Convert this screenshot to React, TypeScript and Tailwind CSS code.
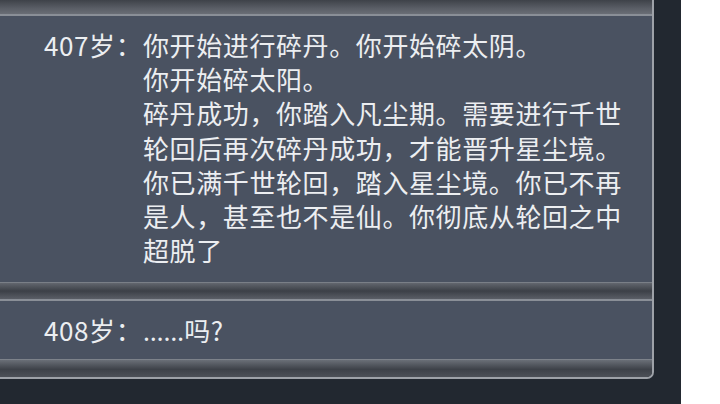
const lines1 = [
  '你开始进行碎丹。你开始碎太阴。',
  '你开始碎太阳。',
  '碎丹成功，你踏入凡尘期。需要进行千世',
  '轮回后再次碎丹成功，才能晋升星尘境。',
  '你已满千世轮回，踏入星尘境。你已不再',
  '是人，甚至也不是仙。你彻底从轮回之中',
  '超脱了',
];

const Divider = ({ bottom = false }: { bottom?: boolean }) => (
  <div
    className={
      bottom
        ? 'h-[18px] border-t border-[#7d828a] bg-[linear-gradient(to_bottom,#6a6f77,#3e4249_55%,#4d5158)]'
        : 'h-[19px] border-t border-b-2 border-t-[#7a7f87] border-b-[#8a8f97] bg-[linear-gradient(to_bottom,#62666e,#3c4047_50%,#5a5e66)]'
    }
  />
);

const Row = ({ age, pb, children }: { age: number; pb: string; children: React.ReactNode }) => (
  <div className={`flex bg-[#4a5261] pl-[44px] pt-[12px] ${pb}`}>
    <div className="w-[99px] shrink-0 whitespace-nowrap">{age}岁：</div>
    <div className="whitespace-nowrap">{children}</div>
  </div>
);

export default function App() {
  return (
    <div
      className="flex h-[404px] w-[720px] overflow-hidden bg-white text-[26px] leading-[34.2px] tracking-[0.6px] text-[#eceef1]"
      style={{ fontFamily: '"Noto Sans CJK SC", "Noto Sans", sans-serif' }}
    >
      <div className="h-full w-[681px] bg-[#222830]">
        <div className="w-[654px] overflow-hidden rounded-br-[7px] border-r-2 border-b-2 border-[#9ea2a8]">
          <div className="h-[16px] border-b-2 border-b-[#8a8f97] bg-[linear-gradient(to_bottom,#3e4249,#5a5e66_60%,#6a6e76)]" />
          <Row age={407} pb="pb-[15px]">
            {lines1.map((l) => (
              <div key={l}>{l}</div>
            ))}
          </Row>
          <Divider />
          <Row age={408} pb="pb-[10px]">
            <span style={{ fontFamily: '"Noto Sans", sans-serif' }} className="tracking-normal">
              ……
            </span>
            吗?
          </Row>
          <Divider bottom />
        </div>
      </div>
    </div>
  );
}
